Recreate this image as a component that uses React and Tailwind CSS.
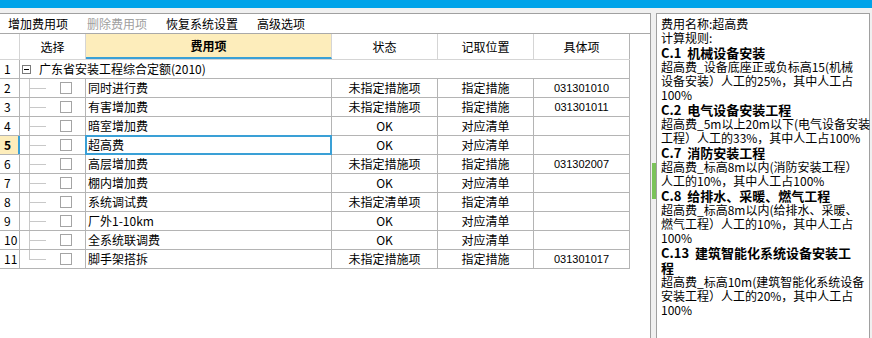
import React from 'react';

const ROWS = [
  { no: 2, name: '同时进行费', state: '未指定措施项', pos: '指定措施', code: '031301010' },
  { no: 3, name: '有害增加费', state: '未指定措施项', pos: '指定措施', code: '031301011' },
  { no: 4, name: '暗室增加费', state: 'OK', pos: '对应清单', code: '' },
  { no: 5, name: '超高费', state: 'OK', pos: '对应清单', code: '', on: true },
  { no: 6, name: '高层增加费', state: '未指定措施项', pos: '指定措施', code: '031302007' },
  { no: 7, name: '棚内增加费', state: 'OK', pos: '对应清单', code: '' },
  { no: 8, name: '系统调试费', state: '未指定清单项', pos: '指定清单', code: '' },
  { no: 9, name: '厂外1-10km', state: 'OK', pos: '对应清单', code: '' },
  { no: 10, name: '全系统联调费', state: 'OK', pos: '对应清单', code: '' },
  { no: 11, name: '脚手架搭拆', state: '未指定措施项', pos: '指定措施', code: '031301017' },
];

// [text, bold]
const RULES = [
  ['费用名称:超高费'],
  ['计算规则:'],
  ['C.1  机械设备安装', true],
  ['超高费_设备底座正或负标高15(机械'],
  ['设备安装）人工的25%，其中人工占'],
  ['100%'],
  ['C.2  电气设备安装工程', true],
  ['超高费_5m以上20m以下(电气设备安装'],
  ['工程）人工的33%，其中人工占100%'],
  ['C.7  消防安装工程', true],
  ['超高费_标高8m以内(消防安装工程）'],
  ['人工的10%，其中人工占100%'],
  ['C.8  给排水、采暖、燃气工程', true],
  ['超高费_标高8m以内(给排水、采暖、'],
  ['燃气工程）人工的10%，其中人工占'],
  ['100%'],
  ['C.13  建筑智能化系统设备安装工', true],
  ['程', true],
  ['超高费_标高10m(建筑智能化系统设备'],
  ['安装工程）人工的20%，其中人工占'],
  ['100%'],
];

const line = 'border-[#b4b4b4]';

function Row({ r, last }) {
  return (
    <div className={`h-[19px] flex border-b ${line}`}>
      <div
        className={[
          'w-[20px] pl-[4px] flex items-center',
          r.on ? 'bg-[#fdedbb] font-bold border-r-2 border-[#3aa0d6]' : `border-r ${line}`,
        ].join(' ')}
      >
        {r.no}
      </div>
      <div className={`w-[66px] flex border-r ${line}`}>
        <div className="ml-[9px] w-[17px] flex flex-col">
          <div className="h-[10px] border-l border-b border-[#c8c8c8]" />
          <div className={last ? 'flex-1' : 'flex-1 border-l border-[#c8c8c8]'} />
        </div>
        <div className="ml-[14px] self-center w-[12px] h-[12px] border border-[#a4a4a4] bg-white" />
      </div>
      <div className={`relative w-[246px] pl-[2px] flex items-center border-r ${line}`}>
        {r.name}
        {r.on && <div className="absolute -left-px -top-px -bottom-px -right-px border-2 border-[#3aa0d6]" />}
      </div>
      <div className={`w-[106px] flex items-center justify-center border-r ${line}`}>{r.state}</div>
      <div className={`w-[96px] flex items-center justify-center border-r ${line}`}>{r.pos}</div>
      <div className={`w-[96px] flex items-center justify-center border-r ${line} font-['Liberation_Sans',sans-serif] text-[11px]`}>
        {r.code}
      </div>
    </div>
  );
}

export default function App() {
  return (
    <div className="w-[872px] h-[338px] bg-[#f0f0f0] flex flex-col overflow-hidden text-[12px] leading-none text-black font-['Noto_Sans_CJK_SC','Noto_Sans',sans-serif]">
      <div className="h-[8px] bg-[#00a3e9] shrink-0" />

      <div className="flex flex-1 min-h-0 pt-[5px]">
        {/* Left: fee table */}
        <div className="w-[651px] bg-white border-t border-r border-[#a0a0a0] flex flex-col">
          <div className="h-[20px] shrink-0 flex items-center gap-[19px] pl-[8px] border-b border-[#a9a9a9]">
            <span>增加费用项</span>
            <span className="text-[#a0a0a0]">删除费用项</span>
            <span>恢复系统设置</span>
            <span>高级选项</span>
          </div>

          <div className="w-[630px]">
            {/* Header */}
            <div className="h-[26px] flex border-b border-[#d5d5d5]">
              <div className="w-[20px] border-r border-[#d5d5d5]" />
              <div className="w-[66px] flex items-center justify-center border-r border-[#d5d5d5]">选择</div>
              <div className="w-[246px] flex items-center justify-center font-bold bg-[#fdedbb] border-b-2 border-b-[#3aa0d6] border-r border-r-[#d5d5d5]">
                费用项
              </div>
              <div className="w-[106px] flex items-center justify-center border-r border-[#d5d5d5]">状态</div>
              <div className="w-[96px] flex items-center justify-center border-r border-[#d5d5d5]">记取位置</div>
              <div className="w-[96px] flex items-center justify-center border-r border-[#b4b4b4]">具体项</div>
            </div>

            {/* Group row */}
            <div className={`h-[19px] flex border-b ${line}`}>
              <div className={`w-[20px] pl-[4px] flex items-center border-r ${line}`}>1</div>
              <div className={`w-[610px] flex items-center border-r ${line}`}>
                <div className="ml-[2px] w-[9px] h-[9px] border border-[#7a7a7a] flex items-center justify-center">
                  <div className="w-[5px] h-px bg-black" />
                </div>
                <span className="ml-[8px]">广东省安装工程综合定额(2010)</span>
              </div>
            </div>

            {ROWS.map((r, i) => (
              <Row key={r.no} r={r} last={i === ROWS.length - 1} />
            ))}
          </div>
        </div>

        {/* Splitter */}
        <div className="w-[5px]">
          <div className="mt-[150px] ml-[1px] w-[4px] h-[36px] bg-[#7bc35a]" />
        </div>

        {/* Right: rule text */}
        <div className="w-[214px] bg-white border-t border-l border-r border-[#a0a0a0] pl-[4px] pt-[3px]">
          {RULES.map(([t, b], i) => (
            <div
              key={i}
              className={b ? 'whitespace-pre font-bold text-[13px] leading-[15px]' : 'whitespace-pre leading-[14px]'}
            >
              {t}
            </div>
          ))}
        </div>
      </div>
    </div>
  );
}
